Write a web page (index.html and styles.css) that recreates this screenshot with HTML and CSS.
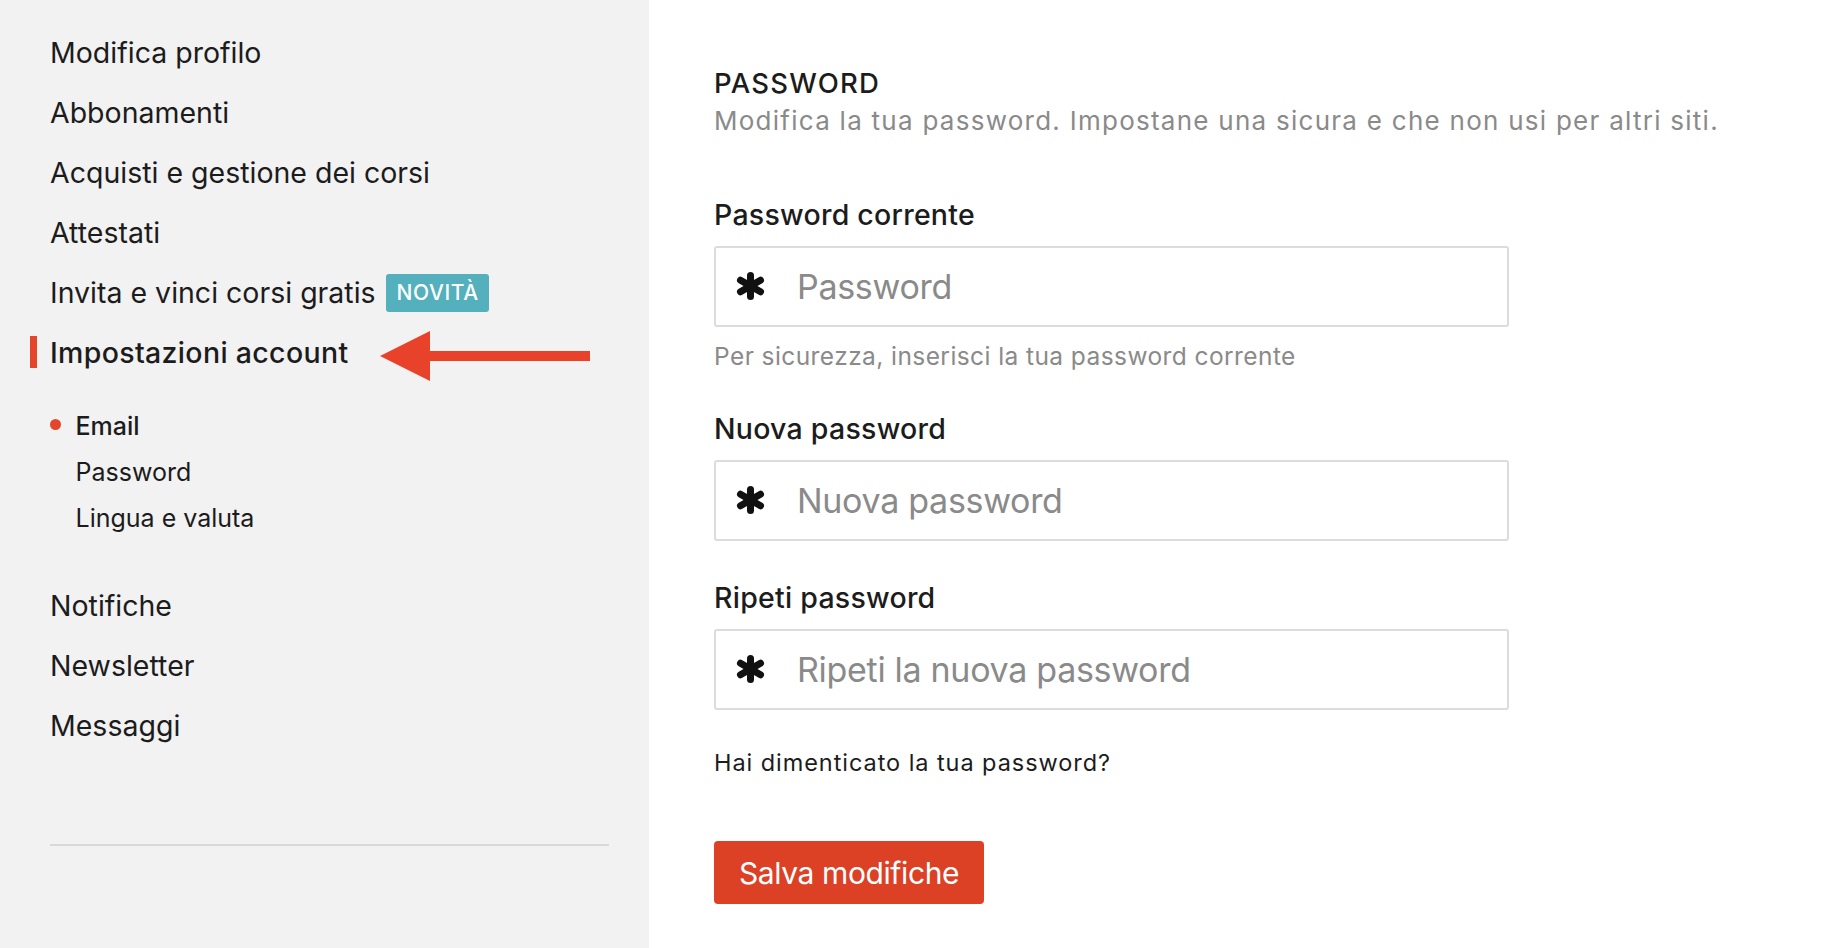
FILE: index.html
```html
<!DOCTYPE html>
<html lang="it">
<head>
<meta charset="utf-8">
<title>Impostazioni account</title>
<link rel="stylesheet" href="styles.css">
</head>
<body>
<div class="page">
  <aside class="sidebar">
    <ul class="nav">
      <li class="nav-item">Modifica profilo</li>
      <li class="nav-item">Abbonamenti</li>
      <li class="nav-item">Acquisti e gestione dei corsi</li>
      <li class="nav-item">Attestati</li>
      <li class="nav-item"><span>Invita e vinci corsi gratis</span><span class="badge">NOVITÀ</span></li>
      <li class="nav-item active"><span>Impostazioni account</span>
        <svg class="arrow" width="211" height="50" viewBox="0 0 211 50" aria-hidden="true"><polygon points="0,25 50,0 50,50" fill="#e8432a"/><rect x="49" y="20" width="161" height="10" fill="#e8432a"/></svg>
      </li>
    </ul>
    <ul class="subnav">
      <li class="sub-item current"><span class="dot-slot"><span class="dot"></span></span><span>Email</span></li>
      <li class="sub-item"><span class="dot-slot"></span><span>Password</span></li>
      <li class="sub-item"><span class="dot-slot"></span><span>Lingua e valuta</span></li>
    </ul>
    <ul class="nav nav-bottom">
      <li class="nav-item">Notifiche</li>
      <li class="nav-item">Newsletter</li>
      <li class="nav-item">Messaggi</li>
    </ul>
    <hr class="divider">
  </aside>
  <main class="content">
    <h2 class="title">PASSWORD</h2>
    <p class="subtitle">Modifica la tua password. Impostane una sicura e che non usi per altri siti.</p>

    <div class="field">
      <label class="label">Password corrente</label>
      <div class="input">
        <svg class="ast" width="29" height="28" viewBox="0 0 29 28" aria-hidden="true"><g stroke="#111" stroke-width="7" stroke-linecap="round"><line x1="14.5" y1="3.5" x2="14.5" y2="24.5"/><line x1="4.5" y1="8.2" x2="24.5" y2="19.8"/><line x1="4.5" y1="19.8" x2="24.5" y2="8.2"/></g></svg>
        <span class="placeholder">Password</span>
      </div>
      <p class="help">Per sicurezza, inserisci la tua password corrente</p>
    </div>

    <div class="field">
      <label class="label">Nuova password</label>
      <div class="input">
        <svg class="ast" width="29" height="28" viewBox="0 0 29 28" aria-hidden="true"><g stroke="#111" stroke-width="7" stroke-linecap="round"><line x1="14.5" y1="3.5" x2="14.5" y2="24.5"/><line x1="4.5" y1="8.2" x2="24.5" y2="19.8"/><line x1="4.5" y1="19.8" x2="24.5" y2="8.2"/></g></svg>
        <span class="placeholder">Nuova password</span>
      </div>
    </div>

    <div class="field">
      <label class="label">Ripeti password</label>
      <div class="input">
        <svg class="ast" width="29" height="28" viewBox="0 0 29 28" aria-hidden="true"><g stroke="#111" stroke-width="7" stroke-linecap="round"><line x1="14.5" y1="3.5" x2="14.5" y2="24.5"/><line x1="4.5" y1="8.2" x2="24.5" y2="19.8"/><line x1="4.5" y1="19.8" x2="24.5" y2="8.2"/></g></svg>
        <span class="placeholder">Ripeti la nuova password</span>
      </div>
    </div>

    <p class="forgot">Hai dimenticato la tua password?</p>
    <button class="save" type="button">Salva modifiche</button>
  </main>
</div>
</body>
</html>
```
FILE: styles.css
```css
* { box-sizing: border-box; }
html, body { margin: 0; padding: 0; }
body {
  font-family: Inter, "Noto Sans", "Liberation Sans", sans-serif;
  color: #1c1c1c;
  background: #fff;
}
.page {
  display: grid;
  grid-template-columns: 649px 1fr;
  min-height: 100vh;
}
.sidebar {
  background: #f2f2f2;
  padding: 23px 40px 0 50px;
}
.nav, .subnav { list-style: none; margin: 0; padding: 0; }
.nav-item {
  font-size: 28.5px;
  line-height: 60px;
  height: 60px;
  display: flex;
  align-items: center;
  gap: 10px;
  position: relative;
  white-space: nowrap;
}
.nav-item.active { font-weight: 500; letter-spacing: 0.33px; }
.nav-item.active::before {
  content: "";
  position: absolute;
  left: -20px;
  top: 13px;
  width: 7px;
  height: 32px;
  background: #e5462b;
}
.arrow { position: absolute; left: 330px; top: 8px; }
.badge {
  display: inline-block;
  background: #54b0bd;
  color: #fff;
  font-size: 21px;
  font-weight: 500;
  letter-spacing: 0.57px;
  line-height: 38px;
  height: 38px;
  padding: 0 10.5px 0 11px;
  border-radius: 3px;
}
.subnav { margin: 20px 0 0; }
.sub-item {
  font-size: 25px;
  line-height: 46px;
  height: 46px;
  display: flex;
  align-items: center;
}
.sub-item.current { font-weight: 500; }
.dot-slot { width: 25.5px; flex: none; display: flex; align-items: center; height: 46px; }
.dot {
  width: 11px;
  height: 11px;
  border-radius: 50%;
  background: #e5462b;
  margin-top: -4px;
}
.nav-bottom { margin-top: 35px; }
.divider {
  border: 0;
  height: 2px;
  background: #d9d9d9;
  margin: 88px 0 0;
}
.content { padding: 67px 0 0 65px; }
.title {
  margin: 0;
  font-size: 27.5px;
  line-height: 32px;
  font-weight: 500;
  letter-spacing: 1.2px;
}
.subtitle {
  margin: 3.5px 0 0;
  font-size: 26px;
  line-height: 36px;
  letter-spacing: 1.26px;
  color: #8a8a8a;
}
.field { margin-top: 58px; width: 795px; }
.field + .field { margin-top: 38.5px; }
.label {
  display: block;
  font-size: 28.5px;
  line-height: 36px;
  font-weight: 500;
  letter-spacing: 0.25px;
}
.input {
  margin-top: 13.5px;
  height: 81px;
  border: 2px solid #dcdcdc;
  border-radius: 3px;
  background: #fff;
  display: flex;
  align-items: center;
  padding-left: 20px;
}
.ast { flex: none; margin-top: -1px; }
.placeholder {
  margin-left: 32px;
  font-size: 34px;
  letter-spacing: -0.3px;
  color: #8a8a8a;
}
.help {
  margin: 13px 0 0;
  font-size: 24.5px;
  line-height: 32px;
  letter-spacing: 0.42px;
  color: #8a8a8a;
}
.forgot {
  margin: 36.5px 0 0;
  font-size: 23.5px;
  line-height: 32px;
  letter-spacing: 0.94px;
}
.save {
  display: block;
  margin-top: 62.5px;
  width: 270px;
  height: 63px;
  border: 0;
  border-radius: 4px;
  background: #dc4126;
  color: #fff;
  font-family: inherit;
  font-size: 30px;
  letter-spacing: -0.4px;
  padding: 0;
}
```
